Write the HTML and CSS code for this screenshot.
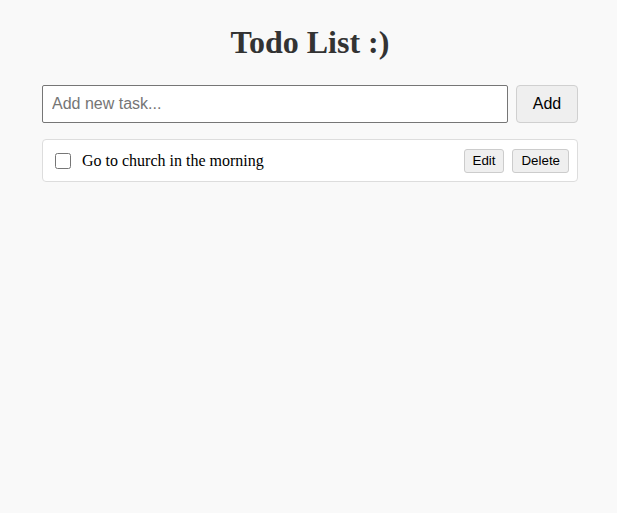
FILE: index.html
```html
<!DOCTYPE html>
<html>
<head>
<meta charset="utf-8">
<link rel="stylesheet" href="styles.css">
</head>
<body>
<div class="app">
  <h1 class="title">Todo List :)</h1>
  <form class="add-row" onsubmit="return false">
    <input class="task-input" type="text" placeholder="Add new task...">
    <button class="add-btn" type="submit">Add</button>
  </form>
  <ul class="todo-list">
    <li class="todo-item">
      <input class="todo-check" type="checkbox">
      <span class="todo-text">Go to church in the morning</span>
      <button class="small-btn">Edit</button>
      <button class="small-btn">Delete</button>
    </li>
  </ul>
</div>
</body>
</html>
```
FILE: styles.css
```css
html, body {
  margin: 0;
  padding: 0;
  background: #f9f9f9;
}
body {
  font-family: "Liberation Serif", serif;
}
.app {
  width: 536px;
  margin: 0 0 0 42px;
  padding-top: 21px;
}
.title {
  font-family: "Liberation Serif", serif;
  font-size: 32px;
  font-weight: bold;
  color: #333;
  text-align: center;
  margin: 0 0 22px 0;
  line-height: 42px;
}
.add-row {
  display: flex;
  gap: 8px;
  margin: 0;
}
.task-input {
  flex: 1;
  height: 38px;
  box-sizing: border-box;
  border: 1px solid #767676;
  border-radius: 2px;
  padding: 0 9px;
  font-family: "Liberation Sans", sans-serif;
  font-size: 16px;
  background: #fff;
  color: #000;
}
.task-input::placeholder {
  color: #757575;
}
.add-btn {
  width: 62px;
  height: 38px;
  box-sizing: border-box;
  border: 1px solid #d0d0d0;
  border-radius: 4px;
  background: #efefef;
  font-family: "Liberation Sans", sans-serif;
  font-size: 16px;
  color: #000;
}
.todo-list {
  list-style: none;
  margin: 16px 0 0 0;
  padding: 0;
}
.todo-item {
  display: flex;
  align-items: center;
  gap: 8px;
  height: 43px;
  box-sizing: border-box;
  background: #fff;
  border: 1px solid #ddd;
  border-radius: 4px;
  padding: 0 8px 0 12px;
}
.todo-check {
  width: 16px;
  height: 16px;
  margin: 0 3px 0 0;
}
.todo-text {
  flex: 1;
  font-size: 16px;
  color: #000;
}
.small-btn {
  height: 24px;
  box-sizing: border-box;
  border: 1px solid #ccc;
  border-radius: 3px;
  background: #efefef;
  font-family: "Liberation Sans", sans-serif;
  font-size: 13.333px;
  padding: 0 8px;
  color: #000;
}
```
